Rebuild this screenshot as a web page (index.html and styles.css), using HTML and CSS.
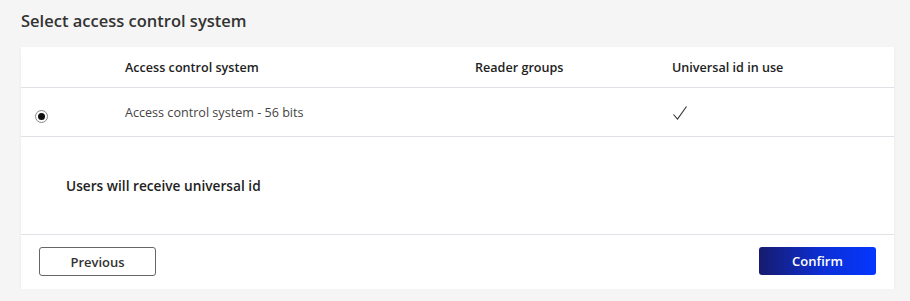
FILE: index.html
```html
<!DOCTYPE html>
<html>
<head>
<meta charset="utf-8">
<link rel="stylesheet" href="styles.css">
</head>
<body>
<h1 class="title">Select access control system</h1>
<div class="card">
  <div class="grid head">
    <div></div>
    <div>Access control system</div>
    <div>Reader groups</div>
    <div>Universal id in use</div>
  </div>
  <div class="grid row">
    <div class="radio-cell"><span class="radio"><span class="dot"></span></span></div>
    <div>Access control system - 56 bits</div>
    <div></div>
    <div><svg class="check" width="16" height="16" viewBox="0 0 16 16"><path d="M1.5 9.5 L5.5 14 L14.5 1.5" fill="none" stroke="#333" stroke-width="1.1"/></svg></div>
  </div>
  <div class="message">Users will receive universal id</div>
  <div class="footer">
    <button class="btn btn-secondary">Previous</button>
    <button class="btn btn-primary">Confirm</button>
  </div>
</div>
</body>
</html>
```
FILE: styles.css
```css
* { box-sizing: border-box; }
body {
  margin: 0;
  background: #f5f5f5;
  font-family: "Open Sans", "Noto Sans", sans-serif;
  color: #333;
}
.title {
  margin: 0;
  padding: 9px 0 0 21px;
  font-size: 16.5px;
  line-height: 24px;
  font-weight: 600;
  color: #333;
}
.card {
  margin: 14px 16px 0 21px;
  background: #fff;
  box-shadow: 0 1px 3px rgba(0,0,0,0.06);
}
.grid {
  display: grid;
  grid-template-columns: 104px 350px 197px 1fr;
  align-items: center;
  font-size: 12.6px;
  border-bottom: 1px solid #dfe3e8;
}
.head {
  height: 41px;
  font-weight: 600;
  color: #222;
}
.row {
  height: 49px;
  color: #444;
}
.radio-cell {
  display: flex;
  padding-left: 14px;
  padding-top: 8px;
}
.radio {
  width: 13px;
  height: 13px;
  border: 1px solid #888;
  border-radius: 50%;
  display: flex;
  align-items: center;
  justify-content: center;
}
.dot {
  width: 7px;
  height: 7px;
  background: #111;
  border-radius: 50%;
}
.check { display: block; margin-top: 1px; }
.message {
  height: 98px;
  display: flex;
  align-items: center;
  padding-left: 45px;
  font-size: 13.7px;
  font-weight: 600;
  color: #222;
  border-bottom: 1px solid #dfe3e8;
}
.footer {
  display: flex;
  justify-content: space-between;
  padding: 12px 18px 13px 18px;
}
.btn {
  width: 117px;
  height: 28px;
  font-family: inherit;
  font-size: 13px;
  font-weight: 600;
  border-radius: 3px;
  cursor: pointer;
}
.btn-secondary {
  background: #fff;
  border: 1px solid #666;
  color: #333;
  height: 29px;
}
.btn-primary {
  border: none;
  color: #fff;
  background: linear-gradient(90deg, #161b6e 0%, #0c2fd6 55%, #0536ff 100%);
}
```
